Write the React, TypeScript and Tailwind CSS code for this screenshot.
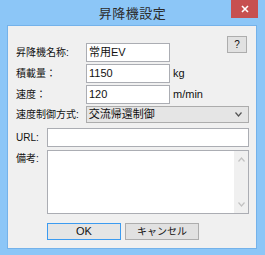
import React from "react";

const font = { fontFamily: '"Liberation Sans", "Noto Sans CJK JP", sans-serif' };

function Chevron({ up = false, className = "" }: { up?: boolean; className?: string }) {
  return (
    <svg width="7" height="5" viewBox="0 0 7 5" className={className}>
      <path
        d={up ? "M0.5 4.5 L3.5 1 L6.5 4.5" : "M0.5 0.5 L3.5 4 L6.5 0.5"}
        fill="none"
        stroke="currentColor"
        strokeWidth="1.2"
      />
    </svg>
  );
}

export default function App() {
  return (
    <div
      className="w-[265px] h-[255px] bg-[#8cc6f7] flex flex-col text-[#111]"
      style={font}
    >
      <div className="relative h-[25px] flex items-center justify-center">
        <span className="text-[13px] leading-none text-[#2b2b2b] tracking-[0.5px]" style={{ fontFamily: '"Noto Sans CJK JP", sans-serif' }}>
          昇降機設定
        </span>
        <div className="absolute right-[7px] top-0 w-[27px] h-[18px] bg-[#c75050] flex items-center justify-center">
          <svg width="8" height="8" viewBox="0 0 8 8">
            <path d="M1 1 L7 7 M7 1 L1 7" stroke="white" strokeWidth="1.6" />
          </svg>
        </div>
      </div>
      <div className="ml-[7px] mr-[8px] h-[224px] bg-[#f0f0f0] border border-[#74b2ea] pt-[17px] pl-[8px] pr-[7px] flex flex-col text-[11px] leading-none">
        <div className="flex items-start h-[19px]">
          <div className="w-[70px] h-[19px] flex items-center text-[10px]">昇降機名称:</div>
          <div className="w-[84px] h-[19px] bg-white border border-[#abadb3] flex items-center px-[2px]">常用EV</div>
          <div className="ml-auto mr-[2px] -mt-[7px] w-[20px] h-[17px] bg-[#e1e1e1] border border-[#adadad] flex items-center justify-center text-[10px]">
            ?
          </div>
        </div>
        <div className="flex items-center h-[19px] mt-[2px]">
          <div className="w-[70px] text-[10px]">積載量：</div>
          <div className="w-[84px] h-[19px] bg-white border border-[#abadb3] flex items-center px-[2px]">1150</div>
          <div className="ml-[3px]">kg</div>
        </div>
        <div className="flex items-center h-[19px] mt-[2px]">
          <div className="w-[70px] text-[10px]">速度：</div>
          <div className="w-[84px] h-[19px] bg-white border border-[#abadb3] flex items-center px-[2px]">120</div>
          <div className="ml-[3px]">m/min</div>
        </div>
        <div className="flex items-center h-[17px] mt-[2px]">
          <div className="w-[70px] text-[10px]">速度制御方式:</div>
          <div className="w-[164px] h-[17px] bg-[#e5e5e5] border border-[#acacac] flex items-center px-[2px]">
            <span>交流帰還制御</span>
            <Chevron className="ml-auto mr-[4px] text-[#555]" />
          </div>
        </div>
        <div className="flex items-center h-[19px] mt-[5px]">
          <div className="w-[31px] text-[10px]">URL:</div>
          <div className="flex-1 h-[19px] bg-white border border-[#abadb3]"></div>
        </div>
        <div className="flex items-start h-[64px] mt-[3px]">
          <div className="w-[31px] pt-[4px] text-[10px]">備考:</div>
          <div className="flex-1 h-[64px] bg-white border border-[#abadb3] flex justify-end">
            <div className="w-[14px] h-full bg-[#f0f0f0] flex flex-col items-center justify-between py-[6px] text-[#c2c2c2]">
              <Chevron up />
              <Chevron />
            </div>
          </div>
        </div>
        <div className="flex ml-[31px] mt-[9px] gap-[4px]">
          <div className="w-[74px] h-[17px] bg-[#e5e5e5] border border-[#3c9bf0] flex items-center justify-center">OK</div>
          <div className="w-[74px] h-[17px] bg-[#e1e1e1] border border-[#adadad] flex items-center justify-center text-[10px]">キャンセル</div>
        </div>
      </div>
    </div>
  );
}
